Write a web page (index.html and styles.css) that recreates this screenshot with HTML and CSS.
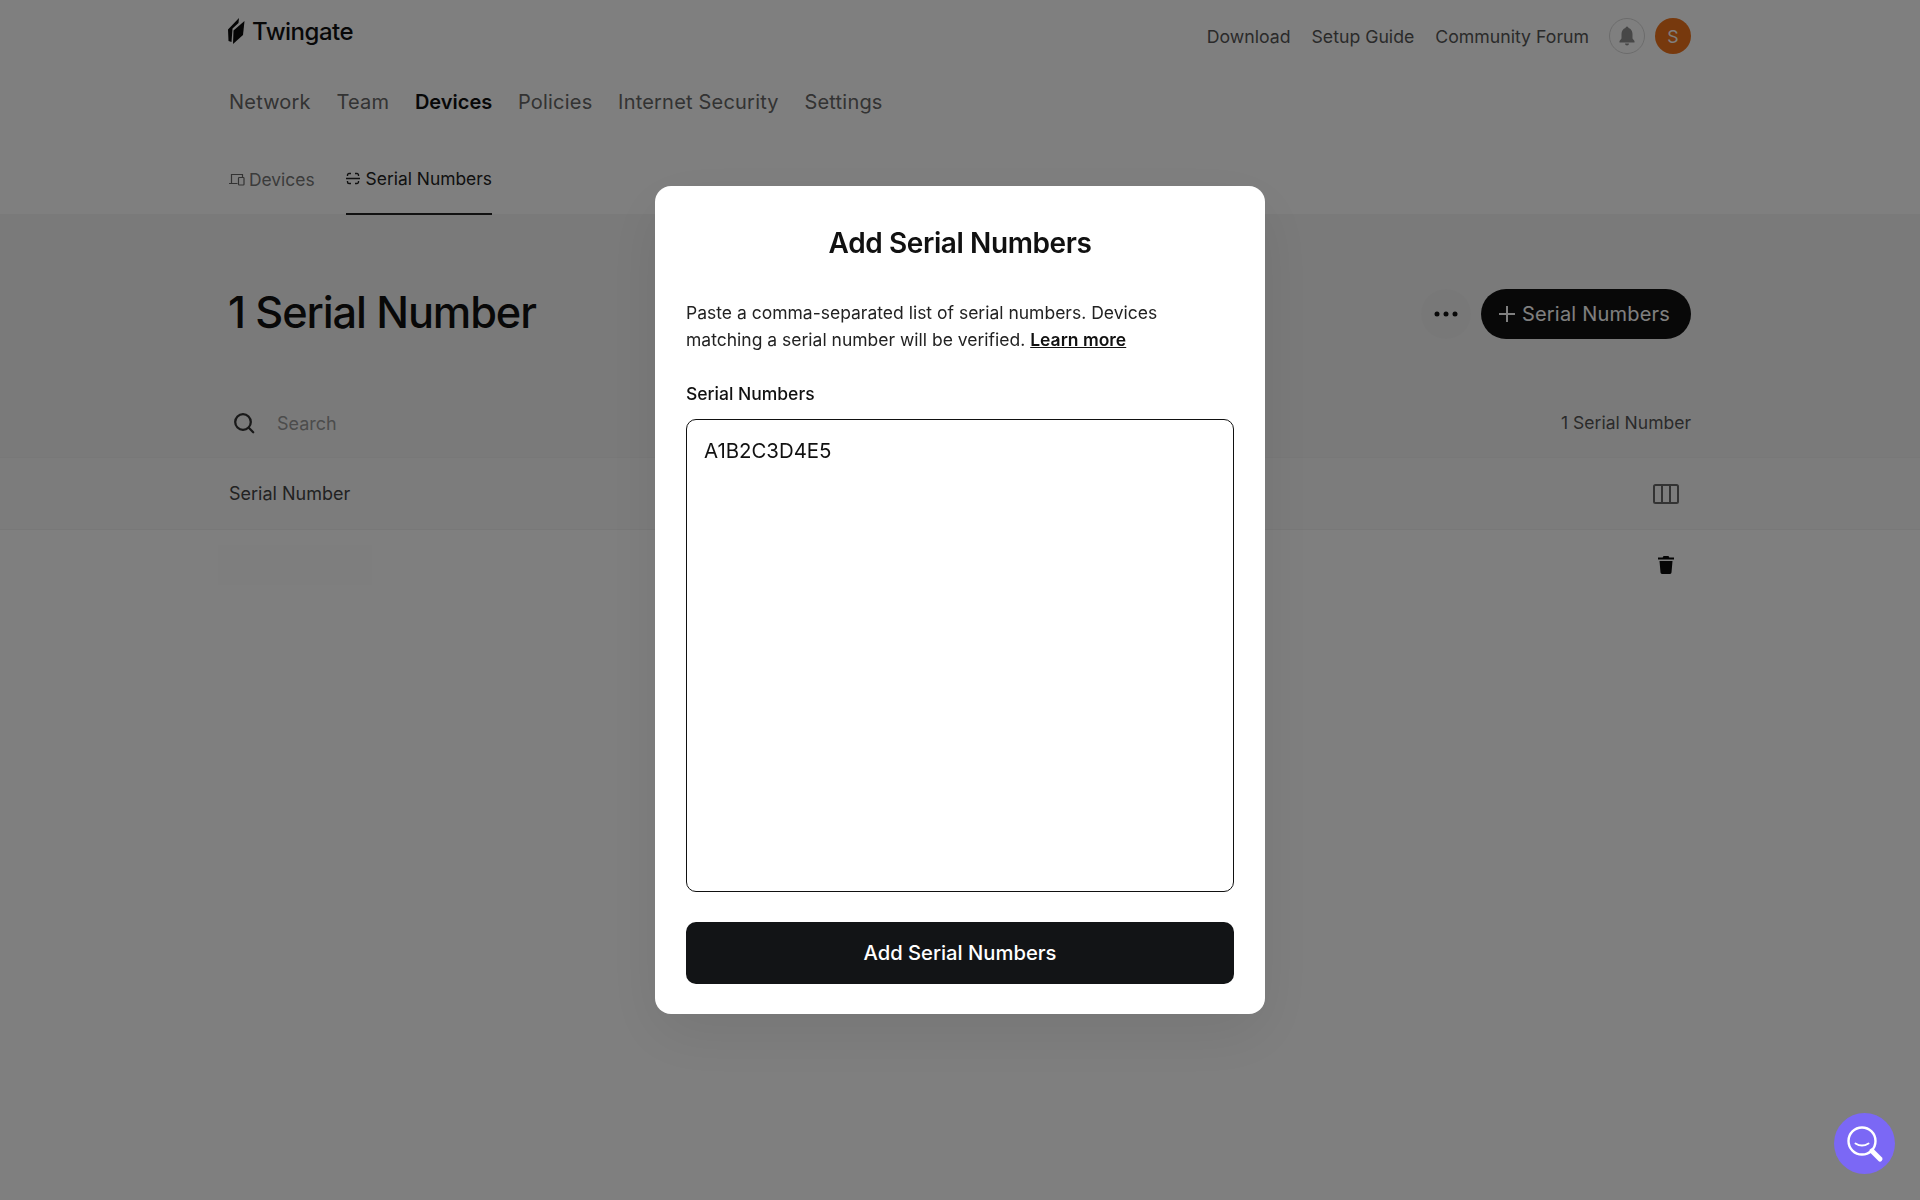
FILE: index.html
```html
<!DOCTYPE html>
<html lang="en">
<head>
    <meta charset="UTF-8">
    <meta name="viewport" content="width=device-width, initial-scale=1.0">
    <title>Twingate - Serial Numbers</title>
    <link rel="stylesheet" href="styles.css">
</head>

<body>
    <header class="site-header">
        <div class="top-bar">
            <a class="logo">
                <svg class="logo-mark" width="17" height="28" viewBox="0 0 17 28" fill="#0b0b0b">
                    <path d="M0 12.500 11 1 10.500 6 4.500 11.500 3.500 25 0.500 24Z"/>
                    <path d="M5.500 13.500 16.500 4 15 18 5 27Z"/>
                </svg>
                <span>Twingate</span>
            </a>
            <nav class="top-links">
                <a>Download</a>
                <a>Setup Guide</a>
                <a>Community Forum</a>
                <span class="bell">
                    <svg width="18" height="20" viewBox="0 0 18 20"><path d="M9 0.500a1.500 1.500 0 0 0-1.500 1.500C5 2.800 3.500 5 3.500 8v4.500L1.500 15v1.500h15V15l-2-2.500V8c0-3-1.500-5.200-4-6A1.500 1.500 0 0 0 9 .5Zm-2 17a2 2 0 0 0 4 0Z" fill="#8e8e8e"/></svg>
                </span>
                <span class="avatar">S</span>
            </nav>
        </div>
        <nav class="main-nav">
            <a>Network</a>
            <a>Team</a>
            <a class="active">Devices</a>
            <a>Policies</a>
            <a>Internet Security</a>
            <a>Settings</a>
        </nav>
        <nav class="sub-nav">
            <a class="sub-tab">
                <svg width="16" height="13" viewBox="0 0 16 13" fill="none" stroke="#666" stroke-width="1.200"><path d="M2.500 10V1.500h11V4M0 10.500h8.500"/><rect x="9.500" y="4.500" width="5.500" height="7.500" rx=".8"/></svg>
                Devices
            </a>
            <a class="sub-tab active">
                <svg width="14" height="13" viewBox="0 0 14 13" fill="none" stroke="#222" stroke-width="1.400"><path d="M1.500 4V3A1.500 1.500 0 0 1 3 1.500h2M9 1.500h2A1.500 1.500 0 0 1 12.500 3v1M1.500 9v1A1.500 1.500 0 0 0 3 11.500h2M9 11.500h2a1.500 1.500 0 0 0 1.500-1.500V9M0 6.500h14"/></svg>
                Serial Numbers
            </a>
        </nav>
    </header>

    <main>
        <section class="summary">
            <div class="title-row">
                <h1>1 Serial Number</h1>
                <div class="title-actions">
                    <button class="more-btn">
                        <svg width="24" height="6" viewBox="0 0 24 6" fill="#111"><circle cx="3" cy="3" r="2.500"/><circle cx="12" cy="3" r="2.500"/><circle cx="21" cy="3" r="2.500"/></svg>
                    </button>
                    <button class="add-btn">
                        <svg width="16" height="16" viewBox="0 0 16 16" stroke="#fff" stroke-width="2"><path d="M8 0v16M0 8h16"/></svg>
                        Serial Numbers
                    </button>
                </div>
            </div>
            <div class="search-row">
                <svg width="22" height="22" viewBox="0 0 22 22" fill="none" stroke="#333" stroke-width="2.300"><circle cx="10" cy="10" r="7.800"/><path d="m15.800 15.800 4.400 4.400" stroke-linecap="round"/></svg>
                <input class="search-input" type="text" placeholder="Search">
                <span class="count">1 Serial Number</span>
            </div>
        </section>
        <div class="table-head">
            <span>Serial Number</span>
            <svg width="26" height="20" viewBox="0 0 26 20" fill="none" stroke="#666" stroke-width="2"><rect x="1" y="1" width="24" height="18" rx="1.500"/><path d="M9 1v18M17 1v18"/></svg>
        </div>
        <div class="table-row">
            <span class="blank-cell"></span>
            <svg width="16" height="18" viewBox="0 0 16 18" fill="#0b0b0b"><path d="M5.500 0h5l.8 1.500H16v2H0v-2h4.700ZM1.500 5h13l-1 11.500A1.600 1.600 0 0 1 12 18H4a1.600 1.600 0 0 1-1.500-1.500Z"/></svg>
        </div>
    </main>

    <div class="overlay">
        <div class="modal">
            <h2>Add Serial Numbers</h2>
            <p>Paste a comma-separated list of serial numbers. Devices matching a serial number will be verified. <a>Learn more</a></p>
            <label for="serials">Serial Numbers</label>
            <textarea id="serials">A1B2C3D4E5</textarea>
            <button class="submit-btn">Add Serial Numbers</button>
        </div>
    </div>

    <button class="help-btn">
        <svg width="38" height="38" viewBox="0 0 38 38" fill="none" stroke="#fff"><circle cx="16" cy="16" r="13.500" stroke-width="2.400"/><path d="M9.500 18.500c4 2.500 9 2.500 13 0" stroke-width="2" stroke-linecap="round"/><path d="m26 26 8 8" stroke-width="5" stroke-linecap="round"/></svg>
    </button>
</body>
</html>
```

FILE: styles.css
```css
* {
    box-sizing: border-box;
}

body {
    margin: 0;
    height: 1200px;
    overflow: hidden;
    background: #fff;
    color: #111;
    font-family: Inter, "Noto Sans", sans-serif;
}

a {
    color: inherit;
}

.site-header {
    padding: 0 229px;
}

.top-bar {
    display: flex;
    justify-content: space-between;
    align-items: center;
    height: 72px;
}

.logo {
    display: flex;
    align-items: center;
    gap: 7px;
    margin-top: -10px;
    margin-left: -1px;
    font-size: 24px;
    font-weight: 500;
    letter-spacing: -0.5px;
    color: #111;
}

.top-links {
    display: flex;
    align-items: center;
    font-size: 17.7px;
    color: #555;
}

.top-links a {
    margin-right: 21px;
}

.top-links a:nth-child(3) {
    margin-right: 20px;
}

.bell,
.avatar {
    display: flex;
    justify-content: center;
    align-items: center;
    width: 36px;
    height: 36px;
    border-radius: 50%;
}

.bell {
    border: 1px solid #d8d8d8;
}

.avatar {
    margin-left: 10px;
    background: #ef731a;
    color: #fff;
}

.main-nav {
    display: flex;
    align-items: center;
    gap: 25.7px;
    height: 60px;
    font-size: 20px;
    letter-spacing: 0.2px;
    color: #666;
}

.main-nav .active {
    font-weight: 600;
    letter-spacing: 0;
    color: #111;
}

.sub-nav {
    display: flex;
    gap: 31px;
    height: 82px;
    font-size: 17.4px;
}

.sub-tab {
    display: flex;
    align-items: center;
    gap: 4px;
    height: 83px;
    padding-top: 11px;
    color: #777;
}

.sub-tab.active {
    gap: 6px;
    color: #222;
    border-bottom: 2px solid #222;
}

.summary {
    height: 244px;
    padding: 0 229px;
    background: #f5f5f5;
    border-bottom: 1px solid #f1f1f1;
}

.title-row {
    display: flex;
    justify-content: space-between;
    align-items: flex-start;
    padding-top: 75px;
}

h1 {
    margin: -3px 0 0 -1px;
    font-size: 43.3px;
    font-weight: 500;
    line-height: 52px;
    letter-spacing: -1.1px;
    color: #111;
}

.title-actions {
    display: flex;
    align-items: center;
    gap: 10px;
}

.more-btn {
    display: flex;
    justify-content: center;
    align-items: center;
    width: 50px;
    height: 50px;
    padding: 0;
    border: none;
    border-radius: 50%;
    background: #f1f1f1;
}

.add-btn {
    display: flex;
    align-items: center;
    gap: 7px;
    height: 50px;
    padding: 0 21px 0 18px;
    border: none;
    border-radius: 25px;
    background: #111;
    color: #fff;
    font-family: inherit;
    font-size: 20px;
    letter-spacing: 0.2px;
}

.search-row {
    display: flex;
    align-items: center;
    margin-top: 69px;
    padding-left: 4px;
    height: 30px;
}

.search-input {
    flex: 1;
    margin-left: 22px;
    padding: 0;
    border: none;
    outline: none;
    background: none;
    font-family: inherit;
    font-size: 18px;
}

.search-input::placeholder {
    color: #999;
}

.count {
    margin-bottom: 1px;
    font-size: 17.5px;
    color: #555;
}

.table-head,
.table-row {
    display: flex;
    justify-content: space-between;
    align-items: center;
    padding: 0 229px;
}

.table-head {
    height: 72px;
    background: #f9f9f9;
    border-bottom: 1px solid #f1f1f1;
    font-size: 18px;
    color: #444;
}

.table-head svg {
    margin-right: 12px;
}

.table-row {
    height: 70px;
    padding-right: 246px;
}

.blank-cell {
    width: 154px;
    height: 40px;
    margin-left: -11px;
    background: #fcfcfc;
}

.overlay {
    position: fixed;
    inset: 0;
    display: flex;
    justify-content: center;
    align-items: center;
    background: rgba(0, 0, 0, 0.5);
}

.modal {
    display: flex;
    flex-direction: column;
    width: 610px;
    height: 828px;
    padding: 30px 31px;
    border-radius: 16px;
    background: #fff;
    box-shadow: 0 20px 60px rgba(0, 0, 0, 0.08);
    color: #111;
}

.modal h2 {
    margin: 10px 0 0;
    font-size: 28px;
    font-weight: 600;
    line-height: 34px;
    letter-spacing: -0.4px;
    text-align: center;
}

.modal p {
    margin: 39px 0 0;
    font-size: 17.5px;
    line-height: 27px;
    color: #222;
}

.modal p a {
    font-weight: 600;
    text-decoration: underline;
    color: #111;
}

.modal label {
    margin-top: 27px;
    font-size: 17.5px;
    font-weight: 500;
    line-height: 27px;
}

.modal textarea {
    height: 473px;
    margin-top: 12px;
    padding: 18px 17px;
    border: 1px solid #111;
    border-radius: 10px;
    outline: none;
    resize: none;
    font-family: inherit;
    font-size: 20.4px;
    line-height: 26px;
    color: #111;
}

.submit-btn {
    height: 62px;
    margin-top: 30px;
    padding: 0 0 2px;
    border: none;
    border-radius: 10px;
    background: #121416;
    color: #fff;
    font-family: inherit;
    font-size: 20.2px;
    font-weight: 500;
}

.help-btn {
    position: fixed;
    right: 25px;
    bottom: 26px;
    display: flex;
    justify-content: center;
    align-items: center;
    width: 61px;
    height: 61px;
    padding: 0;
    border: none;
    border-radius: 50%;
    background: #7b68f5;
}
```
